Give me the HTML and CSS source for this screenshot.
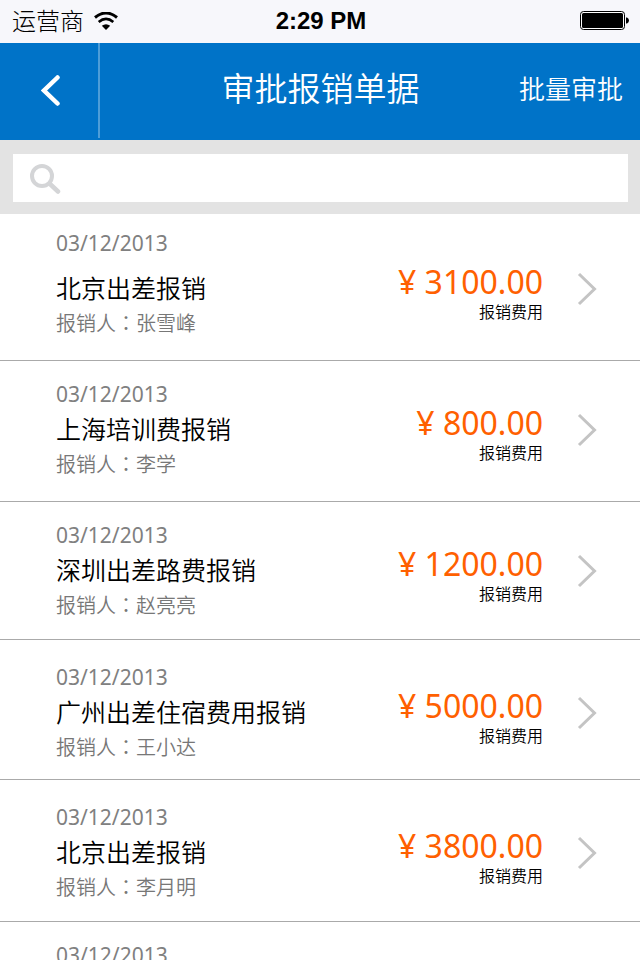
FILE: index.html
```html
<!DOCTYPE html>
<html lang="zh-CN">
<head>
<meta charset="utf-8">
<meta name="viewport" content="width=device-width, initial-scale=1">
<title>审批报销单据</title>
<link rel="stylesheet" href="styles.css">
</head>
<body>
<div class="screen">
  <div class="status">
    <div class="carrier">
      <span>运营商</span>
      <svg class="wifi" width="24" height="18" viewBox="0 0 24 18" aria-hidden="true">
        <path d="M1 5.5Q12-3.5 23 5.5" fill="none" stroke="#000" stroke-width="3"/>
        <path d="M4.700 9.900Q12 3.900 19.300 9.900" fill="none" stroke="#000" stroke-width="2.600"/>
        <path d="M7.800 13.800Q12 10.600 16.200 13.800L12 18Z"/>
      </svg>
    </div>
    <div class="time">2:29 PM</div>
    <svg class="battery" width="50" height="20" viewBox="0 0 50 20" aria-hidden="true">
      <rect x=".5" y=".5" width="44" height="18" rx="3" fill="#fff" stroke="#000"/>
      <rect x="2" y="2" width="41" height="15" rx="1.500"/>
      <path d="M46 6.500h1q2 1 2 3t-2 3h-1z"/>
    </svg>
  </div>
  <header class="nav">
    <button class="back" type="button" aria-label="返回">
      <svg width="20" height="32" viewBox="0 0 20 32" aria-hidden="true"><path d="M16.500 2.500 3 15.500 16.500 28.500" fill="none" stroke="#fff" stroke-width="4.500" stroke-linecap="round"/></svg>
    </button>
    <h1 class="heading">审批报销单据</h1>
    <button class="batch" type="button">批量审批</button>
  </header>
  <form class="search">
    <label class="field">
      <svg width="32" height="32" viewBox="0 0 32 32" fill="none" stroke="#d4d5d7" aria-hidden="true"><circle cx="13" cy="14" r="10" stroke-width="4"/><path d="m21 22 8 7.500" stroke-width="4.500" stroke-linecap="round"/></svg>
      <input type="search" aria-label="搜索">
    </label>
  </form>
  <ul class="list">
    <li class="row row--first">
      <time class="date">03/12/2013</time>
      <a class="entry" href="#">
        <div class="info"><h2 class="title">北京出差报销</h2><p class="person">报销人<span class="colon" lang="zh-TW">：</span>张雪峰</p></div>
        <div class="cost"><div class="amount">¥ 3100.00</div><div class="label">报销费用</div></div>
        <svg class="chevron" width="20" height="34" viewBox="0 0 20 34" aria-hidden="true"><path d="m2 2 15.500 15L2 32"/></svg>
      </a>
    </li>
    <li class="row">
      <time class="date">03/12/2013</time>
      <a class="entry" href="#">
        <div class="info"><h2 class="title">上海培训费报销</h2><p class="person">报销人<span class="colon" lang="zh-TW">：</span>李学</p></div>
        <div class="cost"><div class="amount">¥ 800.00</div><div class="label">报销费用</div></div>
        <svg class="chevron" width="20" height="34" viewBox="0 0 20 34" aria-hidden="true"><path d="m2 2 15.500 15L2 32"/></svg>
      </a>
    </li>
    <li class="row row--snug">
      <time class="date">03/12/2013</time>
      <a class="entry" href="#">
        <div class="info"><h2 class="title">深圳出差路费报销</h2><p class="person">报销人<span class="colon" lang="zh-TW">：</span>赵亮亮</p></div>
        <div class="cost"><div class="amount">¥ 1200.00</div><div class="label">报销费用</div></div>
        <svg class="chevron" width="20" height="34" viewBox="0 0 20 34" aria-hidden="true"><path d="m2 2 15.500 15L2 32"/></svg>
      </a>
    </li>
    <li class="row row--low row--tight">
      <time class="date">03/12/2013</time>
      <a class="entry" href="#">
        <div class="info"><h2 class="title">广州出差住宿费用报销</h2><p class="person">报销人<span class="colon" lang="zh-TW">：</span>王小达</p></div>
        <div class="cost"><div class="amount">¥ 5000.00</div><div class="label">报销费用</div></div>
        <svg class="chevron" width="20" height="34" viewBox="0 0 20 34" aria-hidden="true"><path d="m2 2 15.500 15L2 32"/></svg>
      </a>
    </li>
    <li class="row row--low row--snug">
      <time class="date">03/12/2013</time>
      <a class="entry" href="#">
        <div class="info"><h2 class="title">北京出差报销</h2><p class="person">报销人<span class="colon" lang="zh-TW">：</span>李月明</p></div>
        <div class="cost"><div class="amount">¥ 3800.00</div><div class="label">报销费用</div></div>
        <svg class="chevron" width="20" height="34" viewBox="0 0 20 34" aria-hidden="true"><path d="m2 2 15.500 15L2 32"/></svg>
      </a>
    </li>
    <li class="row">
      <time class="date">03/12/2013</time>
    </li>
  </ul>
</div>
</body>
</html>
```
FILE: styles.css
```css
* { box-sizing: border-box; }
body, h1, h2, p, ul { margin: 0; padding: 0; font-weight: inherit; }
body {
  background: #fff;
  color: #000;
  font-family: "Noto Sans", "Noto Sans CJK SC", sans-serif;
  font-weight: 350;
}
button { border: 0; padding: 0; background: none; color: inherit; font: inherit; cursor: pointer; }
svg { display: block; flex: none; }

.screen { height: 100vh; overflow: hidden; }

.status {
  display: grid;
  grid-template-columns: 1fr auto 1fr;
  align-items: center;
  padding: 0 10px 2px 12px;
  height: 43px;
  background: #f7f7fb;
}
.carrier { display: flex; align-items: center; gap: 10px; font-size: 24px; line-height: 40px; font-weight: 300; }
.time { font: bold 24px/40px "Liberation Sans", sans-serif; }
.battery { justify-self: end; }

.nav {
  display: grid;
  grid-template-columns: 100px 1fr auto;
  align-items: start;
  height: 97px;
  background: #0073c8;
  color: #fff;
}
.back {
  display: flex;
  align-items: center;
  justify-content: center;
  height: 95px;
  padding-left: 4px;
  border-right: 2px solid #4d9dd8;
}
.heading { padding-left: 22px; font-size: 33px; line-height: 92px; text-align: center; }
.batch { padding: 0 17px 0 0; font-size: 26px; line-height: 92px; }

.search {
  padding: 14px 12px 12px 13px;
  background: #e3e3e3;
}
.field { display: flex; align-items: center; height: 48px; padding: 0 16px; background: #fff; }
.field input { flex: 1; min-width: 0; border: 0; outline: 0; background: none; font: inherit; font-size: 24px; }

.list { list-style: none; }
.row { padding: 17px 43px 19px 56px; border-bottom: 1px solid #aaa; }
.row--first { padding-top: 13px; }
.row--first .date { margin-bottom: 10px; }
.row--low { padding-top: 21px; }
.row--snug { padding-bottom: 16px; }
.row--tight { padding-bottom: 14px; }

.date { display: block; color: #808080; font-size: 21px; line-height: 32px; font-weight: 400; }
.entry { display: flex; align-items: flex-start; color: inherit; text-decoration: none; }
.info { flex: 1; }
.title { font-size: 25px; line-height: 38px; }
.person { color: #777; font-size: 20px; line-height: 34px; }
.colon { font-family: "Noto Sans CJK TC", sans-serif; line-height: 1; }
.cost { text-align: right; }
.amount { color: #ff6000; font-size: 32px; line-height: 26px; font-weight: 400; }
.label { font-size: 16px; line-height: 34px; }
.chevron { margin: 3px 0 0 34px; fill: none; stroke: #c4c4c4; stroke-width: 3; }
```
